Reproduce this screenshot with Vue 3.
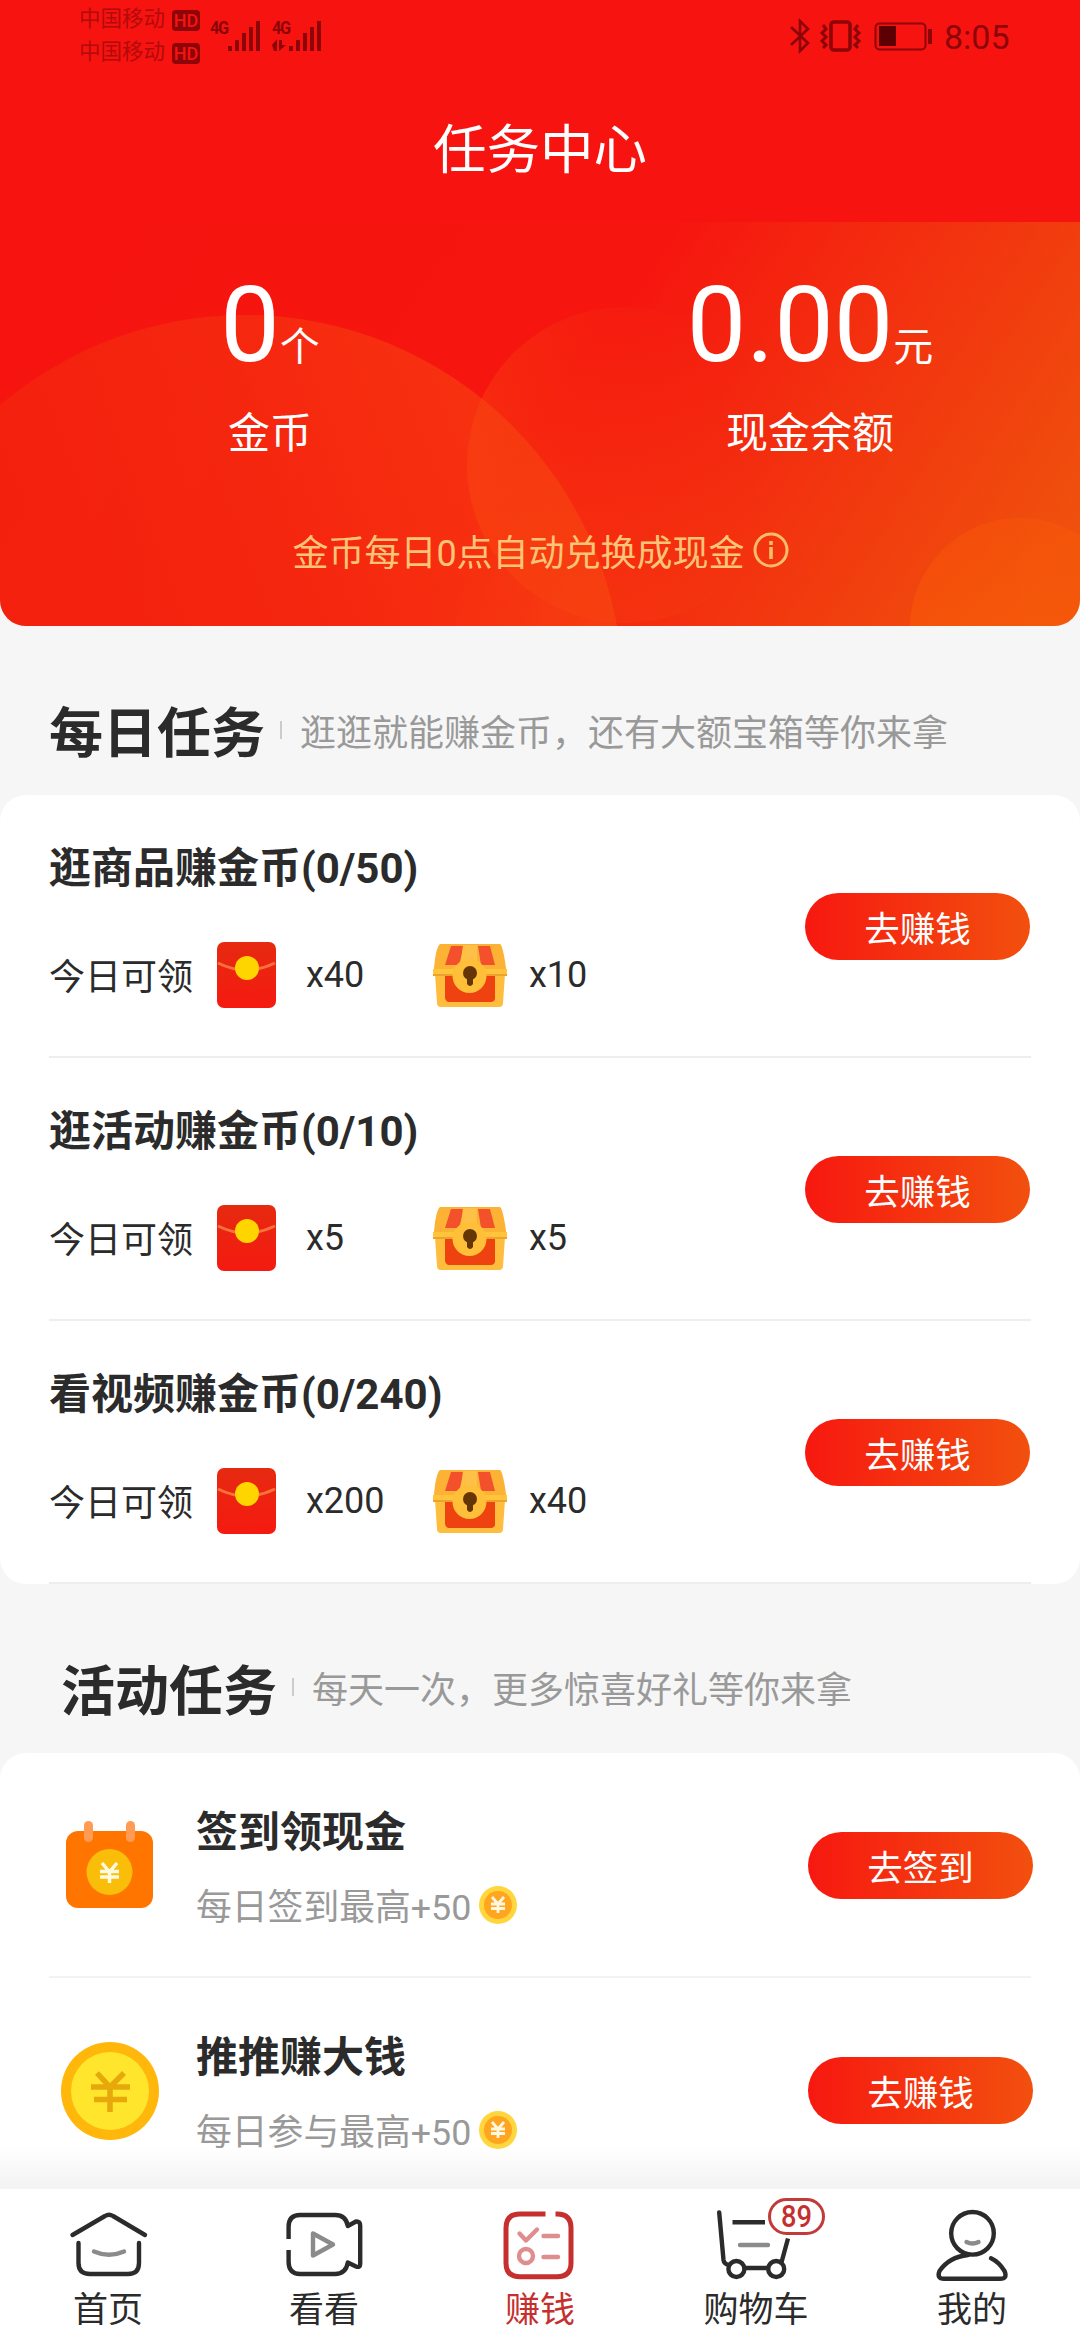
<script setup>
const daily = [
  { name: '逛商品赚金币(0/50)', packets: 'x40', chests: 'x10' },
  { name: '逛活动赚金币(0/10)', packets: 'x5', chests: 'x5' },
  { name: '看视频赚金币(0/240)', packets: 'x200', chests: 'x40' },
]
const events = [
  { icon: 'calendar', name: '签到领现金', note: '每日签到最高+50', action: '去签到' },
  { icon: 'coin', name: '推推赚大钱', note: '每日参与最高+50', action: '去赚钱' },
]
const tabs = [
  { id: 'home', label: '首页' },
  { id: 'video', label: '看看' },
  { id: 'earn', label: '赚钱', active: true },
  { id: 'cart', label: '购物车', badge: '89' },
  { id: 'user', label: '我的' },
]
</script>

<template>
  <div class="page">
    <header class="top">
      <div class="status">
        <div class="carriers">
          <div class="carrier">中国移动<span class="hd">HD</span></div>
          <div class="carrier">中国移动<span class="hd">HD</span></div>
        </div>
        <div class="signal">
          <span class="net">4G</span>
          <svg width="52" height="34" viewBox="0 0 52 34" fill="#8d0509">
            <rect x="18" y="28" width="4" height="5" /><rect x="25" y="22" width="4" height="11" /><rect x="32" y="15" width="4" height="18" /><rect x="39" y="9" width="4" height="24" /><rect x="46" y="3" width="4" height="30" />
          </svg>
        </div>
        <div class="signal second">
          <span class="net">4G</span>
          <svg width="52" height="34" viewBox="0 0 52 34" fill="#8d0509">
            <path d="M0 27l5-6v12h-3zM7 22v11l7-6h-4v-5z" />
            <rect x="17" y="28" width="4" height="5" /><rect x="24" y="22" width="4" height="11" /><rect x="31" y="15" width="4" height="18" /><rect x="38" y="9" width="4" height="24" /><rect x="45" y="3" width="4" height="30" />
          </svg>
        </div>
        <svg class="devices" width="146" height="36" viewBox="0 0 146 36" fill="none" stroke="#8d0509">
          <path d="M2 9l17 16-8 8V3l8 8L2 27" stroke-width="2.6" />
          <rect x="42" y="4" width="19" height="28" rx="3" stroke-width="3.6" />
          <path d="M34 7l3 4-4 4 4 4-4 4 4 4-3 3M69 7l-3 4 4 4-4 4 4 4-4 4 3 3" stroke-width="3" />
          <rect x="86.500" y="5.500" width="50" height="26" rx="4" stroke-width="2" />
          <rect x="90" y="8" width="17" height="20" fill="#5c0003" stroke="none" />
          <path d="M141 11v15" stroke-width="4" />
        </svg>
        <span class="clock">8:05</span>
      </div>
      <h1>任务中心</h1>
    </header>

    <section class="wallet">
      <svg class="rings" width="1080" height="404" viewBox="0 222 1080 404">
        <defs>
          <linearGradient id="ga" gradientUnits="userSpaceOnUse" x1="60" y1="620" x2="520" y2="450">
            <stop offset="0" stop-color="#ee2f0c" stop-opacity=".45" /><stop offset=".5" stop-color="#f4380e" stop-opacity=".5" /><stop offset="1" stop-color="#f95512" stop-opacity=".45" />
          </linearGradient>
          <linearGradient id="gb" gradientUnits="userSpaceOnUse" x1="467" y1="480" x2="720" y2="400">
            <stop offset="0" stop-color="#f8480f" stop-opacity=".48" /><stop offset="1" stop-color="#f6400f" stop-opacity="0" />
          </linearGradient>
          <linearGradient id="gc" gradientUnits="userSpaceOnUse" x1="960" y1="518" x2="960" y2="626">
            <stop offset="0" stop-color="#fb5e06" stop-opacity=".3" /><stop offset="1" stop-color="#fb5e06" stop-opacity=".45" />
          </linearGradient>
        </defs>
        <circle cx="245" cy="693" r="378" fill="url(#ga)" />
        <circle cx="625" cy="465" r="158" fill="url(#gb)" />
        <circle cx="1020" cy="628" r="110" fill="url(#gc)" />
      </svg>
      <div class="balances">
        <div class="balance">
          <p class="amount">0<small>个</small></p>
          <p class="caption">金币</p>
        </div>
        <div class="balance">
          <p class="amount">0.00<small>元</small></p>
          <p class="caption">现金余额</p>
        </div>
      </div>
      <p class="exchange">
        金币每日0点自动兑换成现金
        <svg width="36" height="36" viewBox="0 0 36 36" fill="none" stroke="#fdbd68">
          <circle cx="18" cy="18" r="16" stroke-width="3" />
          <path d="M18 15v12M18 9v4" stroke-width="3.600" />
        </svg>
      </p>
    </section>

    <div class="heading">
      <h2>每日任务</h2><i></i><span>逛逛就能赚金币，还有大额宝箱等你来拿</span>
    </div>
    <section class="panel">
      <div v-for="task in daily" :key="task.name" class="task">
        <div>
          <h3>{{ task.name }}</h3>
          <div class="rewards">
            <span class="today">今日可领</span>
            <svg width="59" height="66" viewBox="0 0 59 66">
              <defs>
                <linearGradient id="env" x1="0" y1="0" x2="0" y2="1"><stop offset="0" stop-color="#e62a10" /><stop offset="1" stop-color="#f51a10" /></linearGradient>
              </defs>
              <rect width="59" height="66" rx="7" fill="url(#env)" />
              <path d="M1 21q28 14 57 0" fill="none" stroke="#fb713c" stroke-width="3" />
              <circle cx="30" cy="26" r="12" fill="#ffd500" />
            </svg>
            <span class="count packets">{{ task.packets }}</span>
            <svg width="74" height="66" viewBox="0 0 74 66">
              <path d="M7 2H67Q70 4 73 26V33H1V26Q3 5 7 2Z" fill="#fcb335" />
              <path d="M18 4H31L26 23H12ZM45 4H57L62 23H48Z" fill="#f2512c" />
              <path d="M2 32H72L70 61Q70 65 66 65H8Q4 65 4 61Z" fill="#ffbd3d" />
              <path d="M12 34H62V57Q61 60 58 60H16Q13 60 12 56Z" fill="#ee4211" />
              <path d="M0 27H74V34H0Z" fill="#ffc43c" /><path d="M0 33H74" stroke="#e69728" stroke-width="1.500" />
              <path d="M30 3H44V26H27Z" fill="#ffc047" />
              <circle cx="36.500" cy="34" r="17" fill="#ffbf39" />
              <circle cx="37" cy="31" r="7" fill="#653505" /><path d="M34 32H40V42Q37 46 34 42Z" fill="#653505" />
            </svg>
            <span class="count">{{ task.chests }}</span>
          </div>
        </div>
        <button>去赚钱</button>
      </div>
    </section>

    <div class="heading event-heading">
      <h2>活动任务</h2><i></i><span>每天一次，更多惊喜好礼等你来拿</span>
    </div>
    <section class="panel events">
      <div v-for="item in events" :key="item.name" class="event">
        <svg v-if="item.icon === 'calendar'" class="event-icon" width="98" height="98" viewBox="0 0 98 98">
          <rect x="5" y="14" width="87" height="77" rx="12" fill="#ff7500" />
          <rect x="23" y="4" width="9" height="21" rx="4.500" fill="#ff9b52" /><rect x="65" y="4" width="9" height="21" rx="4.500" fill="#ff9b52" />
          <circle cx="48.500" cy="55" r="23" fill="#f9bd0a" />
          <path d="M41 46l7.500 9 7.500-9M39 54.500h19M39 60h19M48.500 54v12" fill="none" stroke="#fffbe3" stroke-width="3.500" />
        </svg>
        <svg v-else class="event-icon" width="98" height="98" viewBox="0 0 98 98">
          <circle cx="49" cy="49" r="49" fill="#ffb70b" /><circle cx="49" cy="49" r="39" fill="#ffe62c" />
          <path d="M36 31l13 14 14-14M30 45h39M33 57.500h33M49 44v26" fill="none" stroke="#e6a80b" stroke-width="5.500" />
        </svg>
        <div class="event-text">
          <h3>{{ item.name }}</h3>
          <p>
            <span>{{ item.note }}</span>
            <svg width="38" height="38" viewBox="0 0 38 38">
              <circle cx="19" cy="19" r="19" fill="#ffd63d" /><circle cx="19" cy="19" r="14" fill="#ffa51f" />
              <path d="M13 11l6 7 6-7M12 18h14M12 22.500h14M19 17v10" fill="none" stroke="#fff8e0" stroke-width="2.800" />
            </svg>
          </p>
        </div>
        <button>{{ item.action }}</button>
      </div>
      <div class="fade"></div>
    </section>

    <nav>
      <div v-for="tab in tabs" :key="tab.id" class="tab" :class="{ active: tab.active }">
        <svg width="108" height="84" viewBox="0 0 108 84" fill="none" stroke="currentColor" stroke-width="4.400" stroke-linecap="round" stroke-linejoin="round">
          <template v-if="tab.id === 'home'">
            <path d="M18.500 35L51 16Q55 13.500 59 16L91 35M24.500 43V63Q24.500 74 36 74H74Q85 74 85 63V43" />
            <path class="soft" d="M40 51.500Q55 58 70 51.500" />
          </template>
          <template v-else-if="tab.id === 'video'">
            <path stroke-linecap="butt" d="M18.600 39V27Q18.600 15 30 15H65Q76 15 77.800 26L86 21.500Q90.200 21 90.200 26V64Q90.200 68 86 66.500L77.800 62.500Q76 74 65 74H30Q18.600 74 18.600 62V50" />
            <path class="soft" d="M43 33.500V55.500L63 44.500Z" />
          </template>
          <template v-else-if="tab.id === 'earn'">
            <path stroke-linecap="butt" stroke-width="5" d="M59.500 14H34Q20 14 20 28V63Q20 76.700 34 76.700H71Q85 76.700 85 63V28Q85 14 71 14H69.500" />
            <path class="soft" d="M33.500 33.500L40 40.500L51 29.500M57.500 36H72M57.500 57H72" /><circle class="soft" cx="40" cy="56" r="7" />
          </template>
          <template v-else-if="tab.id === 'cart'">
            <path d="M17.200 12.500L21.500 60Q22 64 27 65M43 68H66" />
            <path stroke-linecap="butt" d="M86 38.500L79.600 62M30.500 22.300H63" />
            <circle cx="34.400" cy="69" r="8" /><circle cx="74.200" cy="69" r="8" />
            <path class="soft" d="M38 45H66" />
          </template>
          <template v-else>
            <circle cx="54.500" cy="33.300" r="21.300" />
            <path d="M50 55Q31 57 21.500 71Q18.500 78.700 26 78.700H82Q90 78.700 86.500 71Q81 62 73 58.300" />
            <path class="soft" d="M48.500 42Q54.500 45 60.500 42" />
          </template>
        </svg>
        <span>{{ tab.label }}</span>
        <b v-if="tab.badge" class="badge"><em>{{ tab.badge }}</em></b>
      </div>
    </nav>
  </div>
</template>

<style>
body {
  margin: 0;
  background: #f6f6f6;
}
</style>

<style scoped>
* {
  box-sizing: border-box;
}
h1, h2, h3, p {
  margin: 0;
}
.page {
  width: 1080px;
  height: 2340px;
  display: flex;
  flex-direction: column;
  overflow: hidden;
  background: #f6f6f6;
  color: #2b2b2b;
  font-family: Roboto, "Noto Sans CJK SC", sans-serif;
  white-space: nowrap;
}
svg {
  display: block;
  flex: none;
}
.top {
  height: 222px;
  flex: none;
  background: #f71410;
}
.status {
  height: 76px;
  display: flex;
  align-items: flex-start;
  padding: 3px 0 0 79px;
  color: #8d0509;
}
.carriers {
  width: 131px;
}
.carrier {
  display: flex;
  align-items: center;
  height: 33px;
  font-size: 21.500px;
  line-height: 30px;
  padding-bottom: 1px;
  color: #b30a0c;
}
.hd {
  width: 28px;
  height: 21px;
  margin: 2px 0 0 7px;
  border-radius: 4px;
  background: #8d0509;
  color: #f71410;
  font-size: 18px;
  font-weight: 500;
  line-height: 22px;
  text-align: center;
}
.signal {
  position: relative;
  width: 62px;
  padding-top: 15px;
}
.net {
  position: absolute;
  left: 0;
  top: 16px;
  font-size: 18px;
  font-weight: 700;
  line-height: 18px;
  letter-spacing: -1.500px;
  transform: scaleX(.9);
  transform-origin: left;
}
.devices {
  margin: 15px 0 0 455px;
}
.clock {
  margin: 13px 0 0 9px;
  font-size: 34px;
  line-height: 42px;
}
h1 {
  color: #fff;
  font-size: 53.500px;
  font-weight: 400;
  line-height: 80px;
  text-align: center;
  padding-top: 35px;
}
.wallet {
  position: relative;
  height: 404px;
  flex: none;
  overflow: hidden;
  background: linear-gradient(123deg, #f71410 0%, #f6150f 50%, #f3300f 70%, #ef520d 96%);
  border-radius: 0 0 26px 26px;
  color: #fff;
}
.rings {
  position: absolute;
  inset: 0;
}
.balances {
  position: relative;
  display: flex;
}
.balance {
  width: 540px;
  text-align: center;
}
.amount {
  height: 173px;
  padding-top: 39px;
  font-size: 106px;
  line-height: 128px;
}
.amount small {
  font-size: 40px;
}
.caption {
  font-size: 42px;
  line-height: 78px;
}
.exchange {
  position: relative;
  display: flex;
  justify-content: center;
  align-items: center;
  gap: 8px;
  height: 50px;
  margin: 52px 0 0 1px;
  color: #fdc477;
  font-size: 36px;
}
.heading {
  height: 169px;
  flex: none;
  display: flex;
  align-items: center;
  padding: 38px 0 0 49px;
  font-size: 36px;
  color: #999;
}
.event-heading {
  padding: 37px 0 0 61px;
}
.heading h2 {
  font-size: 54px;
  font-weight: 700;
  color: #2b2b2b;
}
.heading i {
  width: 2px;
  height: 18px;
  margin: 0 18px 0 15px;
  background: #ccc;
}
.panel {
  flex: none;
  padding: 0 49px;
  background: #fff;
  border-radius: 26px;
}
.task {
  height: 263px;
  display: flex;
  justify-content: space-between;
  border-bottom: 2px solid #eee;
}
h3 {
  font-size: 42px;
  font-weight: 700;
  line-height: 60px;
}
.task h3 {
  padding-top: 44px;
}
.rewards {
  display: flex;
  align-items: center;
  height: 66px;
  margin-top: 43px;
  font-size: 36px;
}
.today {
  width: 168px;
  padding-bottom: 3px;
}
.count {
  margin-left: 22px;
}
.packets {
  width: 127px;
  margin-left: 30px;
}
button {
  width: 225px;
  height: 67px;
  padding: 0;
  border: 0;
  border-radius: 34px;
  background: linear-gradient(90deg, #f71810, #f2500e);
  color: #fff;
  font: inherit;
  font-size: 35.500px;
}
.task button {
  margin: 98px 1px 0 0;
}
.events {
  position: relative;
  height: 436px;
  border-radius: 26px 26px 0 0;
  overflow: hidden;
}
.event {
  height: 225px;
  display: flex;
  border-bottom: 2px solid #f2f2f2;
}
.event-icon {
  margin: 64px 37px 0 12px;
}
.event-text {
  flex: 1;
  padding-top: 50px;
}
.event-text p {
  display: flex;
  align-items: center;
  gap: 8px;
  height: 48px;
  margin-top: 18px;
  font-size: 35.800px;
  color: #999;
}
.event-text p span {
  padding-bottom: 2px;
}
.event button {
  margin: 79px -2px 0 0;
}
.fade {
  position: absolute;
  left: 0;
  right: 0;
  bottom: 0;
  height: 42px;
  background: linear-gradient(rgba(244, 244, 244, 0), #f4f4f4 85%);
}
nav {
  height: 151px;
  flex: none;
  display: flex;
  background: #fff;
}
.tab {
  position: relative;
  width: 216px;
  display: flex;
  flex-direction: column;
  align-items: center;
  padding-top: 11px;
  font-size: 35px;
  line-height: 54px;
}
.active {
  color: #c5302f;
}
.soft {
  opacity: .55;
}
.badge {
  position: absolute;
  left: 120px;
  top: 9px;
  width: 57px;
  height: 37px;
  border: 3px solid #c23b3b;
  border-radius: 19px;
  background: #fff;
  color: #c5302f;
  font-size: 31px;
  font-weight: 500;
  line-height: 32px;
  text-align: center;
}
.badge em {
  display: inline-block;
  font-style: normal;
  transform: scaleX(.88);
}
</style>
